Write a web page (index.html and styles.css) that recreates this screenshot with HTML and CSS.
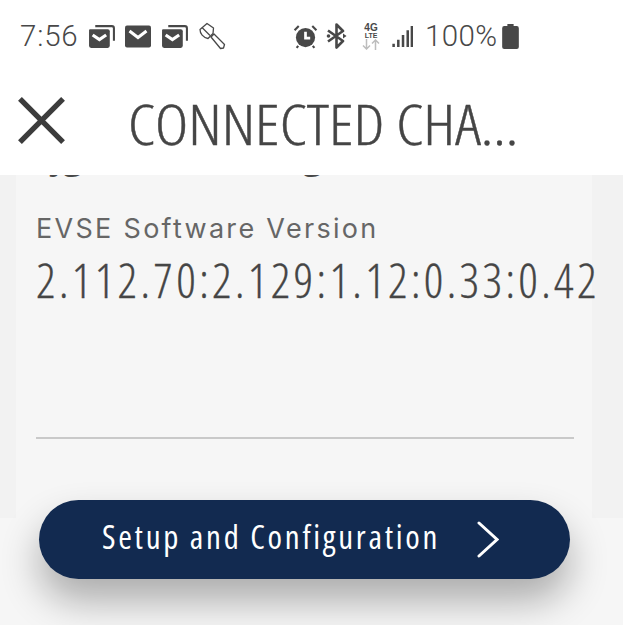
FILE: index.html
```html
<!DOCTYPE html>
<html lang="en">
<head>
<meta charset="utf-8">
<title>Connected Charge Station</title>
<link rel="stylesheet" href="styles.css">
</head>
<body>
<div class="screen">
  <header class="top">
    <div class="status">
      <span class="clock">7:56</span>
      <svg class="ic-mail" viewBox="0 0 27 23"><path class="ol" d="M7 2h16a2 2 0 0 1 2 2v12"/><path class="fill" d="M2 5h17a2 2 0 0 1 2 2v14a2 2 0 0 1-2 2H3a2 2 0 0 1-2-2V6a1 1 0 0 1 1-1z"/><path class="chev" d="M4.500 10.500l6.500 4.500 6.500-4.500"/></svg>
      <svg class="ic-mail1" viewBox="0 0 26 23"><rect class="fill" x="0" y="0.5" width="26" height="22" rx="2"/><path class="chev" d="M4.500 6l8.500 6.500L21.500 6"/></svg>
      <svg class="ic-mail" viewBox="0 0 27 23"><path class="ol" d="M7 2h16a2 2 0 0 1 2 2v12"/><path class="fill" d="M2 5h17a2 2 0 0 1 2 2v14a2 2 0 0 1-2 2H3a2 2 0 0 1-2-2V6a1 1 0 0 1 1-1z"/><path class="chev" d="M4.500 10.500l6.500 4.500 6.500-4.500"/></svg>
      <svg class="ic-torch" viewBox="0 0 28 28"><path class="line" d="M9 1.500L2 7.500c0 4 3 8 8 9l5-5 .5-5.500z"/><path class="line" d="M4 5.500l8 8"/><path class="line" d="M13 15l3-3 10.500 10.500-1 3.500-3 .5z"/></svg>
      <span class="spacer"></span>
      <svg class="ic-alarm" viewBox="0 0 24 24"><circle class="fill" cx="12" cy="13" r="9.200"/><path class="chev2" d="M12 7.500v6h4.500"/><path class="ear" d="M1.500 6l4-4M22.500 6l-4-4M5 21l-1.500 2M19 21l1.500 2"/></svg>
      <svg class="ic-bt" viewBox="0 0 22 26"><path class="bt" d="M2 7.500l15 10.500-6.500 6.500V1.500l6.500 6.500L2 18.500"/><circle class="fill" cx="2.500" cy="13" r="1.800"/><path class="fill" d="M17 10.500l3.500 2.500-3.500 2.500z"/></svg>
      <span class="net">
        <b class="net-4g">4G</b><b class="net-lte">LTE</b>
        <svg class="ic-arrows" viewBox="0 0 18 11"><path class="arr" d="M4.500 0v10M1 6.500l3.500 3.500L8 6.500M13.500 11V1M10 4.500L13.500 1 17 4.500"/></svg>
      </span>
      <svg class="ic-signal" viewBox="0 0 20 22"><path class="bars" d="M1.500 18v3M6 14v7M10.500 9.500V21M15 5v16M19 1v20"/></svg>
      <span class="batt-text">100%</span>
      <svg class="ic-batt" viewBox="0 0 16 24"><path class="fill" d="M5 0h6v2h3a2 2 0 0 1 2 2v18a2 2 0 0 1-2 2H2a2 2 0 0 1-2-2V4a2 2 0 0 1 2-2h3z"/></svg>
    </div>
    <div class="bar">
      <svg class="ic-close" viewBox="0 0 48 48"><path class="x" d="M2 2l44 44M46 2L2 46"/></svg>
      <h1 class="title">CONNECTED CHA...</h1>
    </div>
  </header>
  <main class="body">
    <div class="card">
      <div class="clipped"><span>jg</span><span class="clipped-2">g</span></div>
      <div class="label">EVSE Software Version</div>
      <div class="value">2.112.70:2.129:1.12:0.33:0.42</div>
      <div class="rule"></div>
    </div>
    <button class="cta" type="button">
      <span class="cta-text">Setup and Configuration</span>
      <svg class="ic-next" viewBox="0 0 22 37"><path class="nx" d="M2 2l18 16.500L2 35"/></svg>
    </button>
  </main>
</div>
</body>
</html>
```
FILE: styles.css
```css
* { box-sizing: border-box; }
html, body { margin: 0; padding: 0; }
body { background: #f6f6f6; font-family: "Open Sans", "Liberation Sans", sans-serif; }
.screen { width: 623px; height: 625px; overflow: hidden; display: flex; flex-direction: column; }
.top { height: 175px; background: #fff; flex: none; position: relative; z-index: 2; }
.status { height: 72px; display: flex; align-items: center; padding-left: 20px; color: #484848; }
.clock { font-family: Roboto, sans-serif; font-weight: 300; font-size: 29.500px; letter-spacing: 0.8px; width: 68px; }
.batt-text { font-family: Roboto, sans-serif; font-weight: 300; font-size: 29.500px; letter-spacing: 0.4px; margin-left: 12px; }
.fill { fill: #484848; }
.ol { fill: none; stroke: #484848; stroke-width: 2; }
.chev { fill: none; stroke: #fff; stroke-width: 3; }
.chev2 { fill: none; stroke: #fff; stroke-width: 2.600; }
.line { fill: #fff; stroke: #484848; stroke-width: 1.300; stroke-linejoin: round; }
.ear { fill: none; stroke: #484848; stroke-width: 2; }
.bt { fill: none; stroke: #484848; stroke-width: 2.600; stroke-linejoin: round; }
.bars { fill: none; stroke: #484848; stroke-width: 2.400; }
.arr { fill: none; stroke: #bdbdbd; stroke-width: 1.500; }
.ic-mail { width: 28px; height: 24px; margin-right: 9px; flex: none; }
.ic-mail1 { width: 26px; height: 23px; margin-right: 10px; flex: none; }
.ic-torch { width: 28px; height: 28px; flex: none; }
.spacer { width: 67px; flex: none; }
.ic-alarm { width: 25px; height: 25px; flex: none; margin-right: 8px; }
.ic-bt { width: 22px; height: 26px; flex: none; margin-right: 14px; }
.net { width: 18px; display: flex; flex-direction: column; align-items: center; flex: none; margin-right: 12px; font-family: "Liberation Sans", sans-serif; color: #484848; line-height: 1; }
.net-4g { font-size: 10px; line-height: 9px; }
.net-lte { font-size: 7px; line-height: 7px; }
.ic-arrows { width: 18px; height: 11px; }
.ic-signal { width: 21px; height: 23px; flex: none; }
.ic-batt { width: 17px; height: 25px; margin-left: 4px; flex: none; }
.bar { height: 103px; display: flex; align-items: center; padding-left: 18px; }
.ic-close { width: 47px; height: 47px; flex: none; margin-top: -7px; }
.x { fill: none; stroke: #3c3c3c; stroke-width: 5.500; }
.title { margin: 0 0 0 63px; font-family: "Open Sans", sans-serif; font-stretch: 75%; font-weight: 350; font-size: 55px; line-height: 1; color: #454545; -webkit-text-stroke: 0.4px #454545; white-space: nowrap; transform: scaleX(1.15); transform-origin: left center; }
.body { flex: 1; min-height: 0; }
.card { display: flow-root; margin: 0 31px 0 16px; height: 343px; background: #f6f6f6; padding: 0 20px; box-shadow: -16px 0 0 #f2f2f2, 31px 0 0 #f2f2f2; }
.clipped { display: flex; height: 40px; margin-top: -43px; padding-left: 16px; font-size: 40px; line-height: 40px; color: #484848; }
.clipped-2 { margin-left: 218px; }
.label { margin-top: 39px; font-family: Inter, sans-serif; font-size: 27px; line-height: 36px; letter-spacing: 2.300px; color: #666; white-space: nowrap; }
.value { margin-top: 8px; font-family: "Open Sans", sans-serif; font-stretch: 75%; font-weight: 350; font-size: 48px; line-height: 50px; letter-spacing: 3.360px; color: #454545; -webkit-text-stroke: 0.3px #454545; white-space: nowrap; }
.rule { margin-top: 132px; width: 538px; height: 2px; background: #c9c9c9; }
.cta { margin: -18px 0 0 39px; width: 531px; height: 79px; display: flex; align-items: center; padding: 0 0 6px 63px; border: 0; border-radius: 40px; background: #122a50; color: #fff; box-shadow: 0 22px 38px rgba(0,0,0,.3); position: relative; }
.cta-text { font-family: "Open Sans", sans-serif; font-stretch: 75%; font-size: 33px; letter-spacing: 2.700px; white-space: nowrap; }
.ic-next { width: 22px; height: 37px; margin: 6px 0 0 37px; flex: none; }
.nx { fill: none; stroke: #fff; stroke-width: 3; stroke-linecap: round; }
```
